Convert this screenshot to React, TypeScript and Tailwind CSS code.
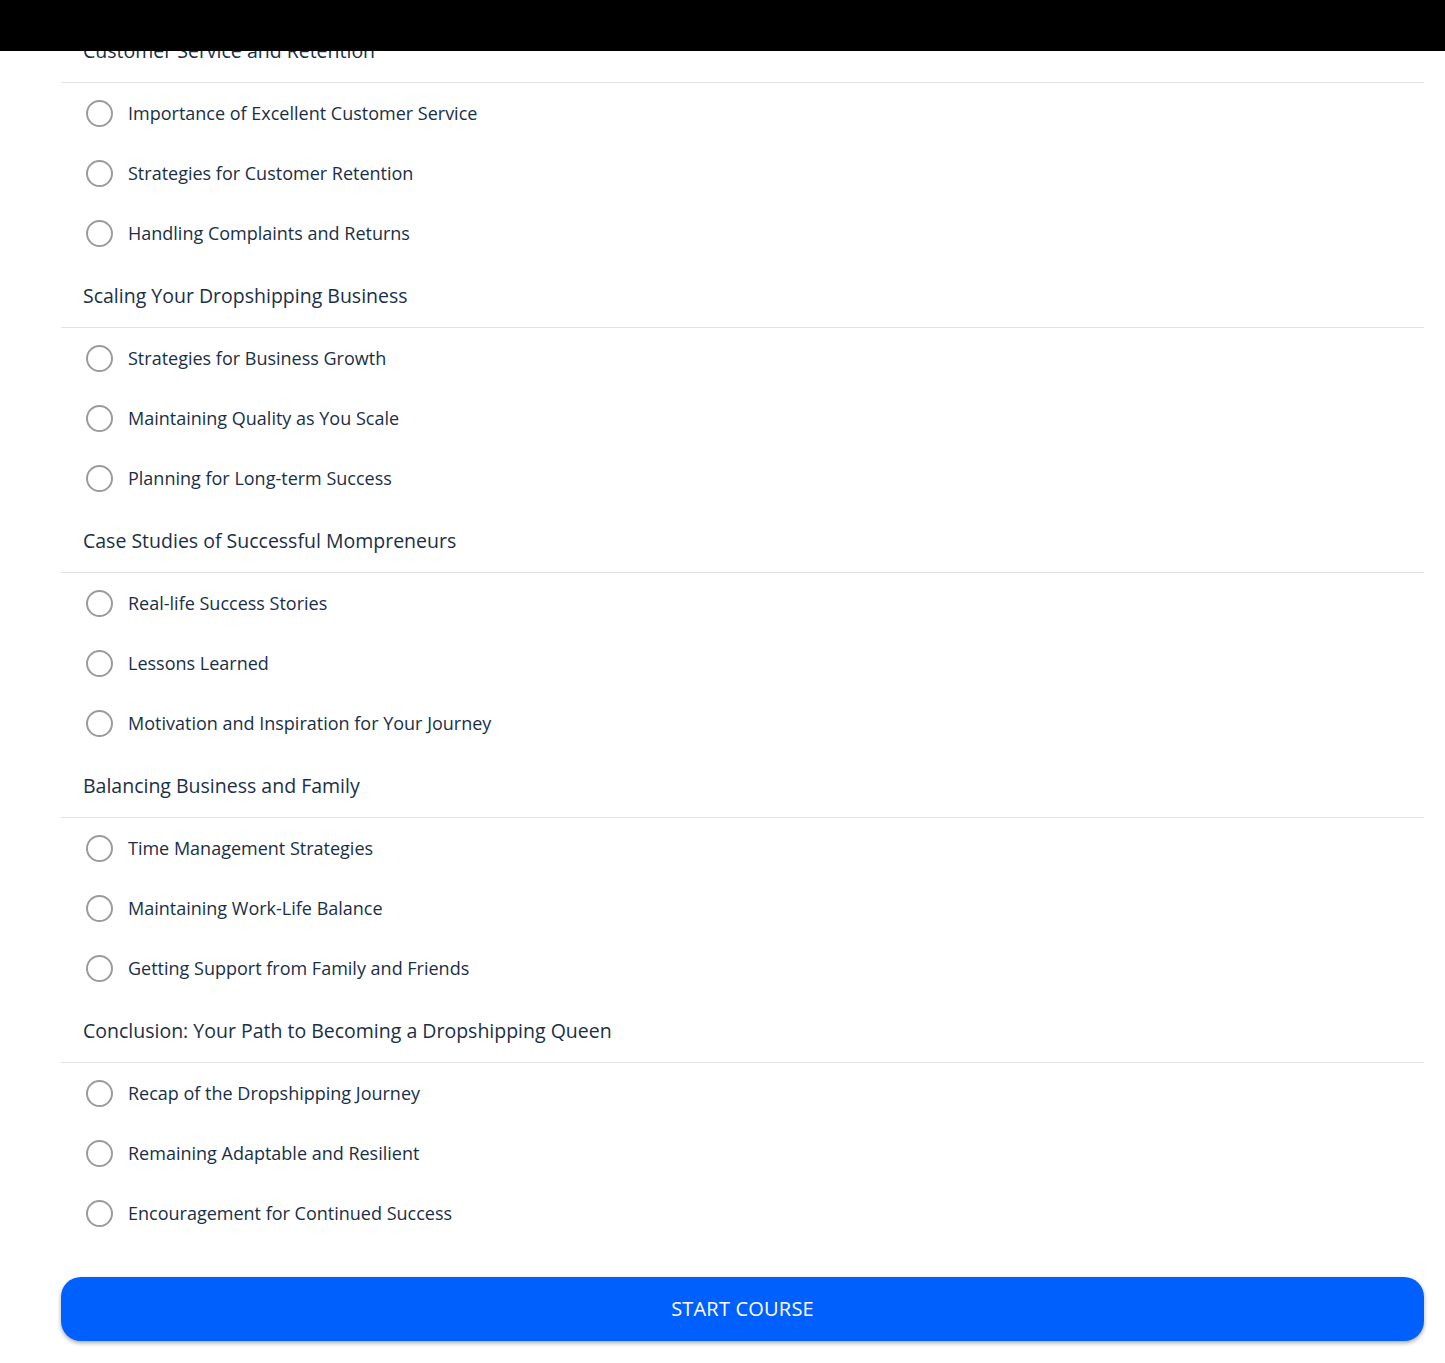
import React from "react";

type Section = { title: string; lessons: string[] };

const sections: Section[] = [
  {
    title: "Customer Service and Retention",
    lessons: [
      "Importance of Excellent Customer Service",
      "Strategies for Customer Retention",
      "Handling Complaints and Returns",
    ],
  },
  {
    title: "Scaling Your Dropshipping Business",
    lessons: [
      "Strategies for Business Growth",
      "Maintaining Quality as You Scale",
      "Planning for Long-term Success",
    ],
  },
  {
    title: "Case Studies of Successful Mompreneurs",
    lessons: [
      "Real-life Success Stories",
      "Lessons Learned",
      "Motivation and Inspiration for Your Journey",
    ],
  },
  {
    title: "Balancing Business and Family",
    lessons: [
      "Time Management Strategies",
      "Maintaining Work-Life Balance",
      "Getting Support from Family and Friends",
    ],
  },
  {
    title: "Conclusion: Your Path to Becoming a Dropshipping Queen",
    lessons: [
      "Recap of the Dropshipping Journey",
      "Remaining Adaptable and Resilient",
      "Encouragement for Continued Success",
    ],
  },
];

function Radio() {
  return (
    <span className="block w-[27px] h-[27px] rounded-full border-[2.5px] border-[#9b9b9b] shrink-0" />
  );
}

function Lesson({ children }: { children: React.ReactNode }) {
  return (
    <div className="h-[60px] flex items-center pl-[25px] gap-[15px]">
      <Radio />
      <span className="text-[18px] text-[#1a2f47]">{children}</span>
    </div>
  );
}

function SectionBlock({ title, lessons }: Section) {
  return (
    <section>
      <h2 className="h-[65px] flex items-center pt-[2px] pl-[22px] text-[19.5px] text-[#1a2f47] border-b border-[#e2e2e2]">
        {title}
      </h2>
      {lessons.map((l) => (
        <Lesson key={l}>{l}</Lesson>
      ))}
    </section>
  );
}

export default function App() {
  return (
    <div
      className="min-h-screen bg-white"
      style={{ fontFamily: '"Open Sans", "Noto Sans", sans-serif' }}
    >
      <div className="fixed top-0 left-0 right-0 h-[51px] bg-black z-10" />
      <div className="pl-[61px] pr-[21px] pt-[18px] pb-[22px]">
        {sections.map((s) => (
          <SectionBlock key={s.title} {...s} />
        ))}
        <button className="mt-[34px] w-full h-[64px] rounded-[20px] bg-[#0060fe] text-white text-[20px] tracking-[0.2px] shadow-[0_2px_4px_rgba(0,0,0,0.35)]">
          START COURSE
        </button>
      </div>
    </div>
  );
}
